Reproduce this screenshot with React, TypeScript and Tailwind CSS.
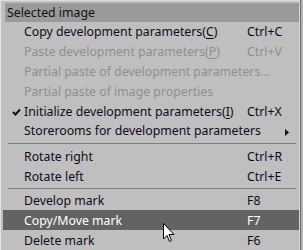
import React from "react";

type Item =
  | { kind: "item"; label: React.ReactNode; shortcut?: string; disabled?: boolean; checked?: boolean; submenu?: boolean; active?: boolean }
  | { kind: "sep"; h: string };

const U = ({ c }: { c: string }) => <span className="underline underline-offset-2">{c}</span>;

const items: Item[] = [
  { kind: "item", label: <>Copy development parameters(<U c="C" />)</>, shortcut: "Ctrl+C" },
  { kind: "item", label: <>Paste development parameters(<U c="P" />)</>, shortcut: "Ctrl+V", disabled: true },
  { kind: "item", label: "Partial paste of development parameters...", disabled: true },
  { kind: "item", label: "Partial paste of image properties", disabled: true },
  { kind: "item", label: <>Initialize development parameters(<U c="I" />)</>, shortcut: "Ctrl+X", checked: true },
  { kind: "item", label: "Storerooms for development parameters", submenu: true },
  { kind: "sep", h: "h-[6px]" },
  { kind: "item", label: "Rotate right", shortcut: "Ctrl+R" },
  { kind: "item", label: "Rotate left", shortcut: "Ctrl+E" },
  { kind: "sep", h: "h-[5px]" },
  { kind: "item", label: "Develop mark", shortcut: "F8" },
  { kind: "item", label: "Copy/Move mark", shortcut: "F7", active: true },
  { kind: "item", label: "Delete mark", shortcut: "F6" },
];

export default function App() {
  return (
    <div className="relative w-[303px] h-[250px] overflow-hidden bg-[#bfbfbf] text-[12.3px] leading-none" style={{ fontFamily: '"Noto Sans", sans-serif' }}>
      <div className="flex h-full">
        <div className="w-px bg-[#e2e2e2]" />
        <div className="flex-1 flex flex-col">
          <div className="h-px bg-[#dedede]" />
          <div className="h-[2px]" />
          <div className="ml-[4px] h-[19px] bg-[#9a9a9a] flex items-center pl-[2px] pt-[2px] text-[#111]">Selected image</div>
          {items.map((it, i) =>
            it.kind === "sep" ? (
              <div key={i} className={`${it.h} flex items-center pl-[7px] pr-[3px]`}>
                <div className="h-px w-full bg-[#7e7e7e]" />
              </div>
            ) : (
              <div
                key={i}
                className={`ml-[2px] h-[20px] flex items-center pt-[2px] relative ${it.active ? "bg-[#636363] text-white" : it.disabled ? "text-[#8f8f8f]" : "text-[#12081e]"}`}
              >
                {it.checked && (
                  <svg className="absolute left-[9px] top-[7px]" width="9" height="8" viewBox="0 0 9 8">
                    <path d="M1 4 L3.5 6.5 L8 1.5" stroke="#111" strokeWidth="2" fill="none" />
                  </svg>
                )}
                <span className="pl-[21px] flex-1 whitespace-nowrap">{it.label}</span>
                {it.shortcut && <span className="absolute left-[244px]">{it.shortcut}</span>}
                {it.submenu && (
                  <svg className="absolute left-[282px] top-[8px]" width="4" height="7" viewBox="0 0 4 7">
                    <path d="M0 0 L4 3.5 L0 7 Z" fill="#111" />
                  </svg>
                )}
              </div>
            )
          )}
        </div>
        <div className="w-px bg-[#d6d6d6]" />
        <div className="w-px bg-[#6a6a6a]" />
        <div className="w-[2px] bg-[#b4b4b4]" />
      </div>
      <svg className="absolute left-[163px] top-[223px]" width="12" height="20" viewBox="0 0 12 20">
        <path d="M0.5 0.5 L0.5 16 L4 12.5 L6.5 18.5 L8.5 17.5 L6 11.5 L11 11.5 Z" fill="#fff" stroke="#000" strokeWidth="1" />
      </svg>
    </div>
  );
}
